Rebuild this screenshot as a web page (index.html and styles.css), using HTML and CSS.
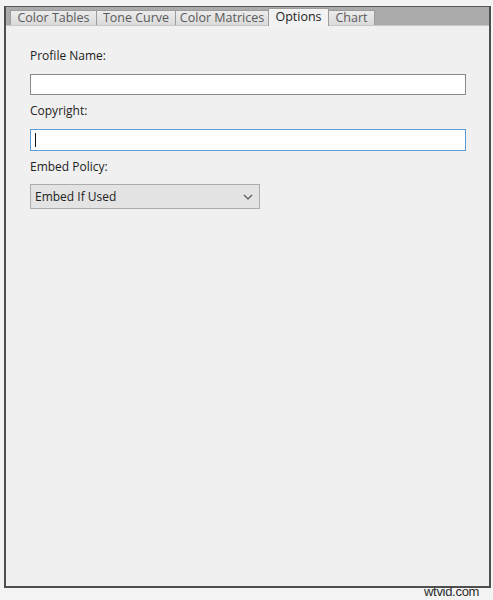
FILE: index.html
```html
<!DOCTYPE html>
<html>
<head>
<meta charset="utf-8">
<link rel="stylesheet" href="styles.css">
</head>
<body>
<div class="panel">
  <div class="tabbar">
    <div class="tab t1">Color Tables</div>
    <div class="tab t2">Tone Curve</div>
    <div class="tab t3">Color Matrices</div>
    <div class="tab t4 active">Options</div>
    <div class="tab t5">Chart</div>
  </div>
  <div class="content">
    <div class="field">
      <div class="label">Profile Name:</div>
      <div class="textbox"></div>
    </div>
    <div class="field">
      <div class="label">Copyright:</div>
      <div class="textbox focused"><span class="caret"></span></div>
    </div>
    <div class="field">
      <div class="label">Embed Policy:</div>
      <div class="select">
        <span class="select-text">Embed If Used</span>
        <svg class="chev" width="10" height="6" viewBox="0 0 10 6"><path d="M1 1 L5 5 L9 1" fill="none" stroke="#555" stroke-width="1.2"/></svg>
      </div>
    </div>
  </div>
</div>
<div class="watermark">wtvid.com</div>
</body>
</html>
```
FILE: styles.css
```css
html, body {
  margin: 0;
  padding: 0;
}
body {
  background: #f3f3f3;
  width: 493px;
  height: 600px;
  position: relative;
  overflow: hidden;
  font-family: "Open Sans", "Noto Sans", sans-serif;
  font-size: 12px;
  color: #222;
}
.panel {
  margin: 6px 0 0 4px;
  width: 483px;
  height: 579px;
  border: 2px solid #4e4e4e;
  border-top: 1px solid #5a5a5a;
  background: #f0f0f0;
  display: flex;
  flex-direction: column;
}
.tabbar {
  height: 18px;
  background: #ababab;
  display: flex;
  align-items: flex-end;
  padding-left: 4px;
  border-bottom: 1px solid #c8c8c8;
}
.tab {
  height: 15px;
  line-height: 14px;
  box-sizing: border-box;
  text-align: center;
  color: #5a5a5a;
  background: linear-gradient(#ececec, #dadada);
  border: 1px solid #9c9c9c;
  border-bottom: none;
  margin-right: -1px;
  font-size: 12.5px;
  white-space: nowrap;
}
.t1 { width: 87px; }
.t2 { width: 80px; }
.t3 { width: 94px; }
.t4 { width: 61px; }
.t5 { width: 47px; }
.tab.active {
  line-height: 16px;
  background: #f2f2f2;
  color: #222;
  position: relative;
  z-index: 1;
  margin-bottom: -1px;
  height: 18px;
}
.content {
  padding: 22px 0 0 24px;
}
.field {
  margin-bottom: 8px;
}
.label {
  line-height: 16px;
  margin-bottom: 10px;
  color: #222;
}
.textbox {
  width: 436px;
  height: 21px;
  box-sizing: border-box;
  background: #fff;
  border: 1px solid #8a8a8a;
  display: flex;
  align-items: center;
}
.textbox.focused {
  border-color: #5a9ad6;
  height: 22px;
}
.caret {
  display: block;
  width: 1px;
  height: 14px;
  background: #111;
  margin-left: 4px;
}
.select {
  width: 230px;
  height: 25px;
  box-sizing: border-box;
  background: #e3e3e3;
  border: 1px solid #acacac;
  display: flex;
  align-items: center;
  justify-content: space-between;
  padding: 0 6px 0 4px;
  margin-top: -1px;
}
.select-text {
  color: #222;
}
.watermark {
  position: absolute;
  left: 424px;
  top: 584px;
  font-family: "Liberation Sans", sans-serif;
  font-size: 13px;
  color: #2a2a2a;
  letter-spacing: -0.3px;
}
```
